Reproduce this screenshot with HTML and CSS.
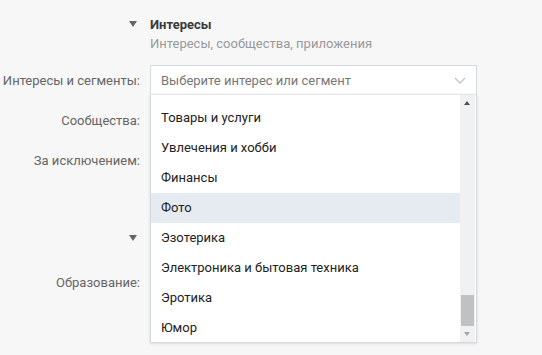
FILE: index.html
```html
<!DOCTYPE html>
<html lang="ru">
<head>
  <meta charset="UTF-8">
  <title>Интересы</title>
  <link rel="stylesheet" href="styles.css">
</head>
<body>

  <div class="section">
    <div class="row head">
      <div class="label"><span class="arrow"></span></div>
      <div class="title">Интересы</div>
    </div>
    <div class="row sub">
      <div class="label"></div>
      <div class="hint">Интересы, сообщества, приложения</div>
    </div>

    <div class="row field">
      <div class="label">Интересы и сегменты:</div>
      <div class="control">
        <div class="select">
          <span class="placeholder">Выберите интерес или сегмент</span>
          <svg class="chevron" width="12" height="7" viewBox="0 0 12 7">
            <path d="M1 1 L6 6 L11 1" fill="none" stroke="#c4c4c4" stroke-width="1.3"/>
          </svg>
        </div>

        <!-- выпадающий список -->
        <div class="dropdown">
          <ul class="options">
            <li>Товары и услуги</li>
            <li>Увлечения и хобби</li>
            <li>Финансы</li>
            <li class="active">Фото</li>
            <li>Эзотерика</li>
            <li>Электроника и бытовая техника</li>
            <li>Эротика</li>
            <li>Юмор</li>
          </ul>
          <div class="scrollbar">
            <div class="btn up"></div>
            <div class="track"><div class="thumb"></div></div>
            <div class="btn down"></div>
          </div>
        </div>
      </div>
    </div>

    <div class="row field">
      <div class="label">Сообщества:</div>
      <div class="control"></div>
    </div>
    <div class="row field">
      <div class="label">За исключением:</div>
      <div class="control"></div>
    </div>
  </div>

  <div class="section second">
    <div class="row head">
      <div class="label"><span class="arrow"></span></div>
      <div class="title"></div>
    </div>
    <div class="row field">
      <div class="label">Образование:</div>
      <div class="control"></div>
    </div>
  </div>

</body>
</html>
```

FILE: styles.css
```css
html {
  background-color: #f7f7f7;
}

body {
  margin: 0;
  min-height: 355px;
  background-color: #f7f7f7;
  font-family: Roboto, "Liberation Sans", Arial, sans-serif;
  font-size: 13px;
  color: #222;
}

.section {
  padding-top: 14px;
}

.section.second {
  padding-top: 43px;
}

.row {
  display: grid;
  grid-template-columns: 140px 327px;
  column-gap: 10px;
  align-items: center;
}

.label {
  text-align: right;
  color: #656565;
  white-space: nowrap;
}

.head {
  height: 20px;
}

.head .label {
  display: flex;
  justify-content: flex-end;
  padding-right: 3px;
}

.arrow {
  width: 0;
  height: 0;
  border-left: 4px solid transparent;
  border-right: 4px solid transparent;
  border-top: 6px solid #666;
}

.title {
  font-weight: bold;
  color: #3a3a3a;
  font-size: 13px;
}

.sub {
  height: 18px;
  margin-bottom: 13px;
}

.hint {
  color: #999;
}

.field {
  height: 30px;
  margin-bottom: 10px;
}

.second .head {
  margin-bottom: 19px;
}

.control {
  position: relative;
  height: 30px;
}

.select {
  box-sizing: border-box;
  height: 30px;
  background: #fff;
  border: 1px solid #d3d9de;
  display: flex;
  align-items: center;
  justify-content: space-between;
  padding: 0 10px;
}

.placeholder {
  color: #777;
}

.chevron {
  margin-top: 1px;
}

.dropdown {
  position: absolute;
  top: 29px;
  left: 0;
  z-index: 5;
  box-sizing: border-box;
  width: 327px;
  height: 249px;
  background: #fff;
  border: 1px solid #d3d9de;
  border-top-color: #e4e4e4;
  box-shadow: 0 1px 3px rgba(0, 0, 0, 0.12);
  display: flex;
}

.options {
  list-style: none;
  margin: 0;
  padding: 8px 0 0;
  flex: 1;
}

.options li {
  height: 30px;
  line-height: 30px;
  padding-left: 10px;
}

.options li.active {
  background-color: #e6ebf2;
}

.scrollbar {
  width: 15px;
  margin-right: 1px;
  background: #f1f1f1;
  display: flex;
  flex-direction: column;
}

.btn {
  height: 16px;
  position: relative;
}

.btn::after {
  content: "";
  position: absolute;
  left: 4px;
  border-left: 3.5px solid transparent;
  border-right: 3.5px solid transparent;
}

.btn.up::after {
  top: 6px;
  border-bottom: 4px solid #505050;
}

.btn.down::after {
  top: 6px;
  border-top: 4px solid #a3a3a3;
}

.track {
  flex: 1;
  display: flex;
  flex-direction: column;
  justify-content: flex-end;
  padding: 0 1px;
}

.thumb {
  height: 31px;
  background: #c1c1c1;
}
```
